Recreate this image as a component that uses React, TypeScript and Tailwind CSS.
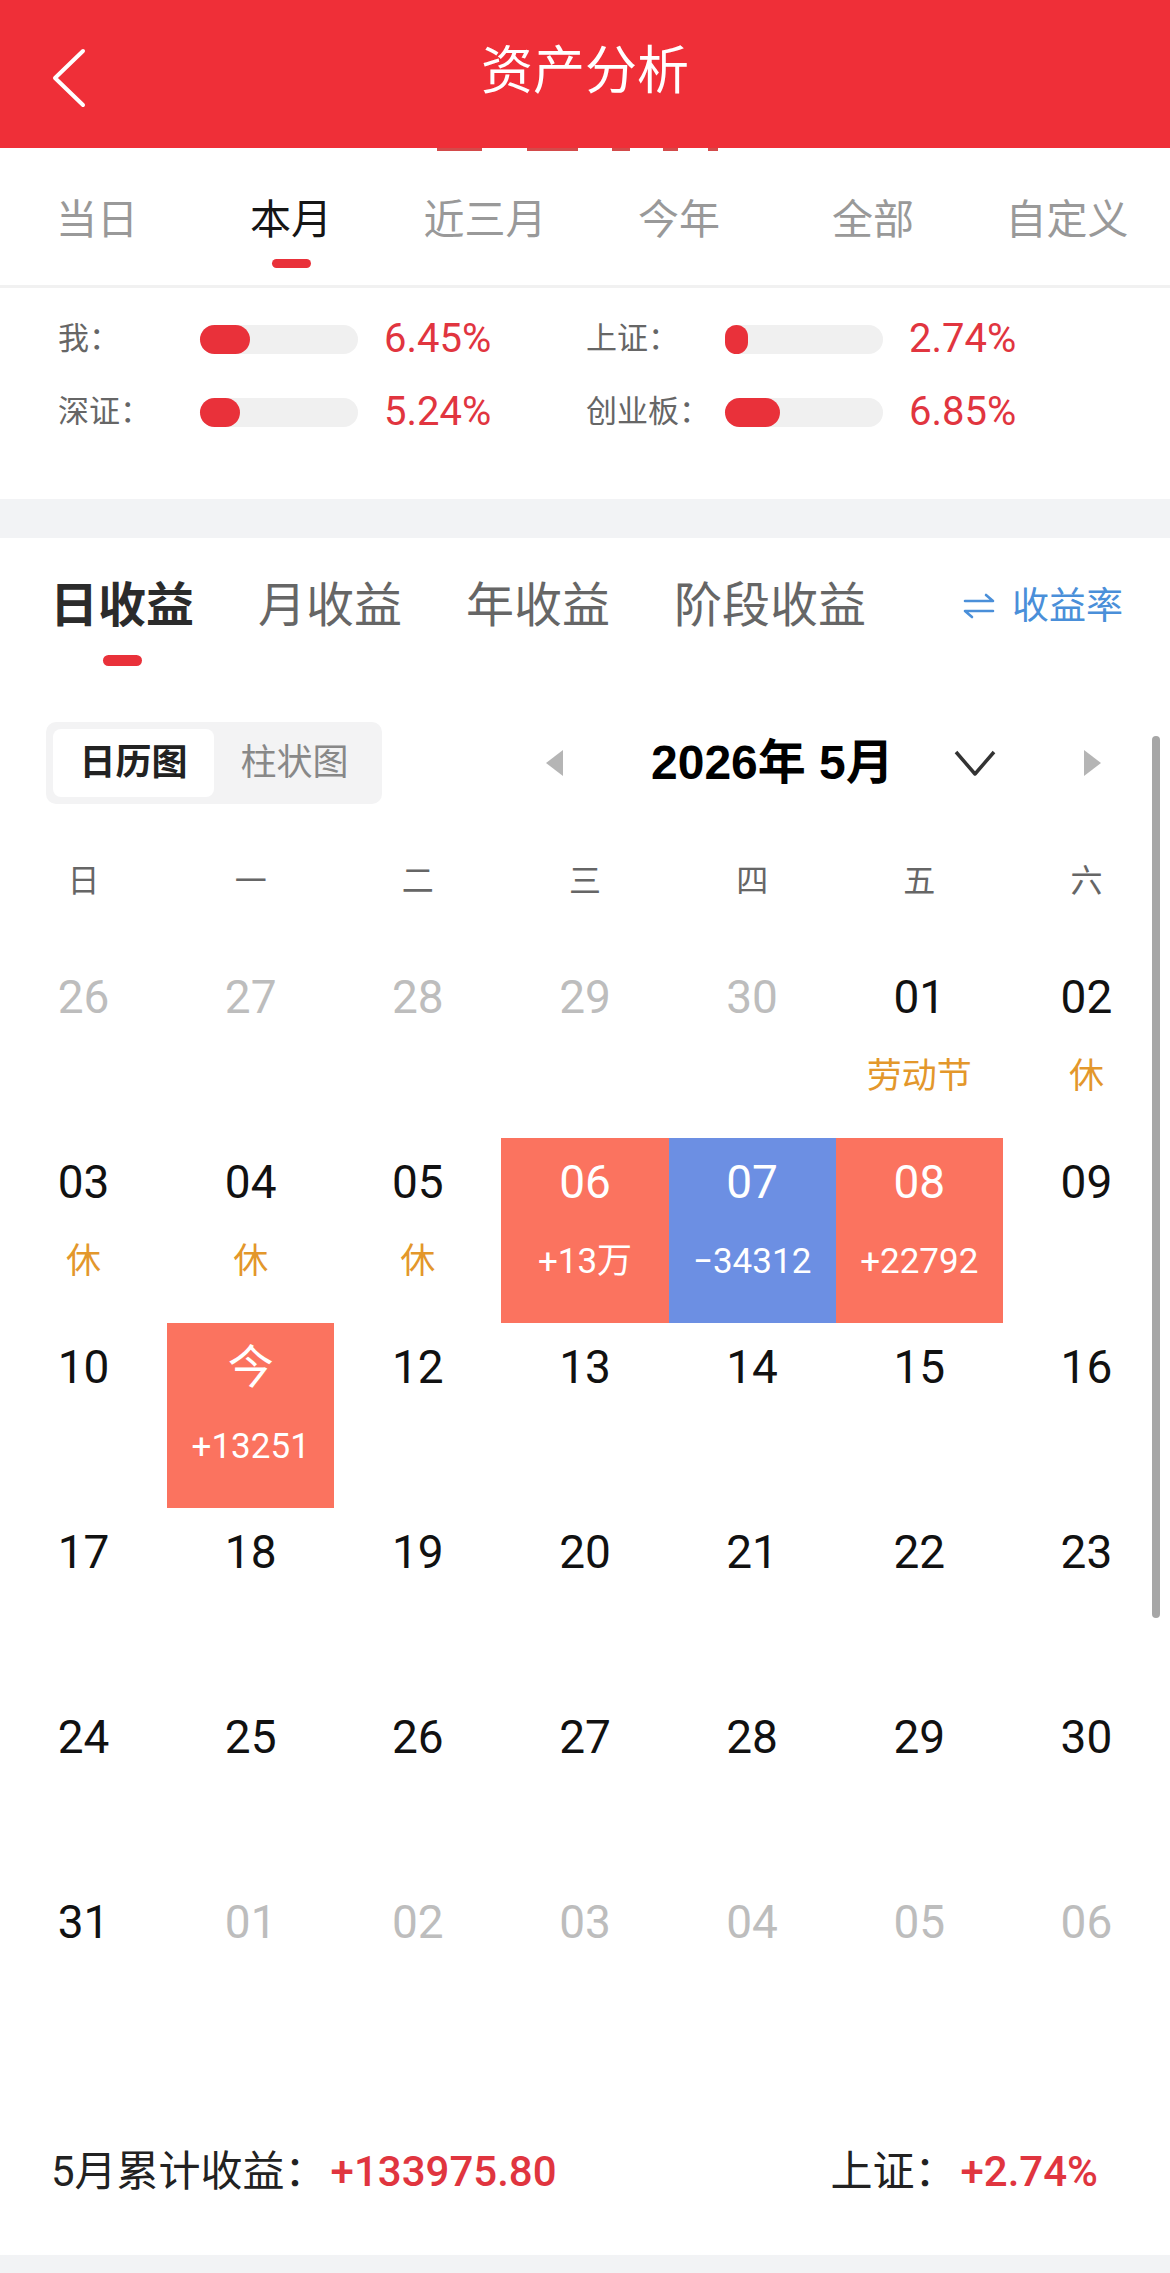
import React from 'react';

type Day = {
  n: string;
  muted?: boolean;
  sub?: string;
  tone?: 'up' | 'down';
};

const weekdays = ['日', '一', '二', '三', '四', '五', '六'];

const weeks: Day[][] = [
  [
    { n: '26', muted: true },
    { n: '27', muted: true },
    { n: '28', muted: true },
    { n: '29', muted: true },
    { n: '30', muted: true },
    { n: '01', sub: '劳动节' },
    { n: '02', sub: '休' },
  ],
  [
    { n: '03', sub: '休' },
    { n: '04', sub: '休' },
    { n: '05', sub: '休' },
    { n: '06', sub: '+13万', tone: 'up' },
    { n: '07', sub: '−34312', tone: 'down' },
    { n: '08', sub: '+22792', tone: 'up' },
    { n: '09' },
  ],
  [
    { n: '10' },
    { n: '今', sub: '+13251', tone: 'up' },
    { n: '12' },
    { n: '13' },
    { n: '14' },
    { n: '15' },
    { n: '16' },
  ],
  ['17', '18', '19', '20', '21', '22', '23'].map((n) => ({ n })),
  ['24', '25', '26', '27', '28', '29', '30'].map((n) => ({ n })),
  [
    { n: '31' },
    { n: '01', muted: true },
    { n: '02', muted: true },
    { n: '03', muted: true },
    { n: '04', muted: true },
    { n: '05', muted: true },
    { n: '06', muted: true },
  ],
];

const periods = ['当日', '本月', '近三月', '今年', '全部', '自定义'];
const incomeTabs = ['日收益', '月收益', '年收益', '阶段收益'];

function StatRow({
  label,
  fill,
  value,
  labelWidth,
}: {
  label: string;
  fill: number;
  value: string;
  labelWidth: string;
}) {
  return (
    <div className="flex h-[40px] items-center">
      <span className={`${labelWidth} text-[31px] leading-[40px] text-[#666666]`}>
        {label}
      </span>
      <div className="h-[29px] w-[158px] rounded-full bg-[#f0f0f0]">
        <div
          className="h-full rounded-full bg-[#e9313a]"
          style={{ width: `${fill}px` }}
        />
      </div>
      <span className="ml-[26px] text-[40px] leading-[40px] text-[#e1353f]">
        {value}
      </span>
    </div>
  );
}

function DayCell({ day }: { day: Day }) {
  const bg =
    day.tone === 'up'
      ? 'bg-[#fb735f]'
      : day.tone === 'down'
        ? 'bg-[#6c8fe3]'
        : 'bg-white';
  const numColor = day.tone
    ? 'text-white'
    : day.muted
      ? 'text-[#bdbdbd]'
      : 'text-[#111111]';
  const subColor = day.tone ? 'text-white' : 'text-[#e3972b]';
  return (
    <div className={`flex h-[185px] flex-col items-center pt-[21px] ${bg}`}>
      <span className={`h-[46px] text-[46px] leading-[46px] ${numColor}`}>
        {day.n}
      </span>
      {day.sub && (
        <span className={`mt-[39px] text-[35px] leading-[35px] ${subColor}`}>
          {day.sub}
        </span>
      )}
    </div>
  );
}

export default function App() {
  return (
    <div className="relative w-[1170px] overflow-hidden bg-white font-['Roboto','Noto_Sans_CJK_SC',sans-serif]">
      {/* top bar */}
      <header className="flex h-[148px] items-center bg-[#ef2f38] pb-[4px]">
        <div className="flex w-[200px] pl-[52px] pt-[12px]">
          <svg width="34" height="60" viewBox="0 0 34 60" fill="none">
            <polyline
              points="31,3 3,30 31,57"
              stroke="white"
              strokeWidth="4"
              strokeLinecap="round"
              strokeLinejoin="round"
            />
          </svg>
        </div>
        <h1 className="flex-1 text-center text-[52px] leading-[60px] text-white">
          资产分析
        </h1>
        <div className="w-[200px]" />
      </header>

      {/* clipped content peeking under the bar */}
      <div className="flex h-[3px]">
        <div className="w-[437px]" />
        <div className="w-[45px] bg-[#d34a4a]" />
        <div className="w-[45px]" />
        <div className="w-[51px] bg-[#d34a4a]" />
        <div className="w-[34px]" />
        <div className="w-[18px] bg-[#d34a4a]" />
        <div className="w-[33px]" />
        <div className="w-[15px] bg-[#d34a4a]" />
        <div className="w-[30px]" />
        <div className="w-[10px] bg-[#d34a4a]" />
      </div>

      {/* period tabs */}
      <nav className="grid h-[137px] grid-cols-6 border-b-[3px] border-[#f1f1f1] pr-[6px] pt-[49px]">
        {periods.map((p, i) => (
          <div key={p} className="flex flex-col items-center">
            <span
              className={`text-[41px] leading-[41px] ${
                i === 1 ? 'text-[#151515]' : 'text-[#999999]'
              }`}
            >
              {p}
            </span>
            {i === 1 && (
              <span className="mt-[18px] h-[9px] w-[39px] rounded-full bg-[#e9313a]" />
            )}
          </div>
        ))}
      </nav>

      {/* comparison bars */}
      <section className="flex h-[211px] flex-col gap-[33px] pl-[58px] pt-[31px]">
        <div className="flex">
          <div className="w-[528px]">
            <StatRow label="我：" fill={50} value="6.45%" labelWidth="w-[142px]" />
          </div>
          <StatRow label="上证：" fill={23} value="2.74%" labelWidth="w-[139px]" />
        </div>
        <div className="flex">
          <div className="w-[528px]">
            <StatRow label="深证：" fill={40} value="5.24%" labelWidth="w-[142px]" />
          </div>
          <StatRow label="创业板：" fill={55} value="6.85%" labelWidth="w-[139px]" />
        </div>
      </section>

      <div className="h-[39px] bg-[#f2f3f5]" />

      {/* income tabs */}
      <section className="flex items-start pl-[50px] pr-[47px] pt-[44px]">
        <div className="flex gap-[64px]">
          {incomeTabs.map((t, i) => (
            <div key={t} className="flex flex-col items-center">
              <span
                className={`text-[48px] leading-[48px] ${
                  i === 0 ? 'font-bold text-[#2b2b2b]' : 'text-[#666666]'
                }`}
              >
                {t}
              </span>
              {i === 0 && (
                <span className="mt-[25px] h-[11px] w-[39px] rounded-full bg-[#e9313a]" />
              )}
            </div>
          ))}
        </div>
        <div className="ml-auto flex h-[48px] items-center gap-[16px] text-[#4a8fd9]">
          <svg width="34" height="26" viewBox="0 0 34 26" fill="none">
            <path
              d="M3 8H31L24 2M31 18H3L10 24"
              stroke="#4a8fd9"
              strokeWidth="2.6"
              strokeLinecap="round"
              strokeLinejoin="round"
            />
          </svg>
          <span className="text-[37px] leading-[37px]">收益率</span>
        </div>
      </section>

      {/* view switch + month picker */}
      <section className="mt-[56px] flex h-[82px] items-center pl-[46px]">
        <div className="flex h-[82px] w-[336px] rounded-[10px] bg-[#f3f3f4] p-[7px]">
          <div className="flex w-[161px] items-center justify-center rounded-[8px] bg-white text-[36px] font-bold text-[#222222]">
            日历图
          </div>
          <div className="flex flex-1 items-center justify-center text-[36px] text-[#888888]">
            柱状图
          </div>
        </div>
        <svg className="ml-[163px]" width="19" height="28" viewBox="0 0 19 28">
          <polygon points="18,1 1,14 18,27" fill="#b5b5b5" />
        </svg>
        <span className="ml-[87px] w-[303px] text-[48px] font-bold leading-[56px] text-black font-['Liberation_Sans','Noto_Sans_CJK_SC',sans-serif]">
          2026年 5月
        </span>
        <svg width="42" height="27" viewBox="0 0 42 27" fill="none">
          <polyline
            points="2,2 21,24 40,2"
            stroke="#333333"
            strokeWidth="3.5"
            strokeLinejoin="round"
          />
        </svg>
        <svg className="ml-[87px]" width="19" height="28" viewBox="0 0 19 28">
          <polygon points="1,1 18,14 1,27" fill="#b5b5b5" />
        </svg>
      </section>

      {/* weekdays */}
      <div className="mt-[47px] grid h-[60px] grid-cols-7">
        {weekdays.map((w) => (
          <div
            key={w}
            className="flex items-center justify-center text-[32px] text-[#666666]"
          >
            {w}
          </div>
        ))}
      </div>

      {/* calendar */}
      <div className="mt-[42px] grid grid-cols-7">
        {weeks.flat().map((d, i) => (
          <DayCell key={i} day={d} />
        ))}
      </div>

      {/* month summary */}
      <footer className="flex items-center justify-between pb-[62px] pl-[51px] pr-[72px] pt-[88px] text-[42px] leading-[42px]">
        <div className="flex">
          <span className="text-[#222222]">5月累计收益：</span>
          <span className="ml-[4px] font-medium text-[#e0353f]">+133975.80</span>
        </div>
        <div className="flex">
          <span className="text-[#222222]">上证：</span>
          <span className="ml-[4px] font-medium text-[#e0353f]">+2.74%</span>
        </div>
      </footer>
      <div className="h-[20px] bg-[#f2f3f5]" />

      {/* scroll indicator */}
      <div className="absolute left-[1152px] top-[736px] h-[882px] w-[8px] rounded-full bg-[#a6a6a6]" />
    </div>
  );
}
